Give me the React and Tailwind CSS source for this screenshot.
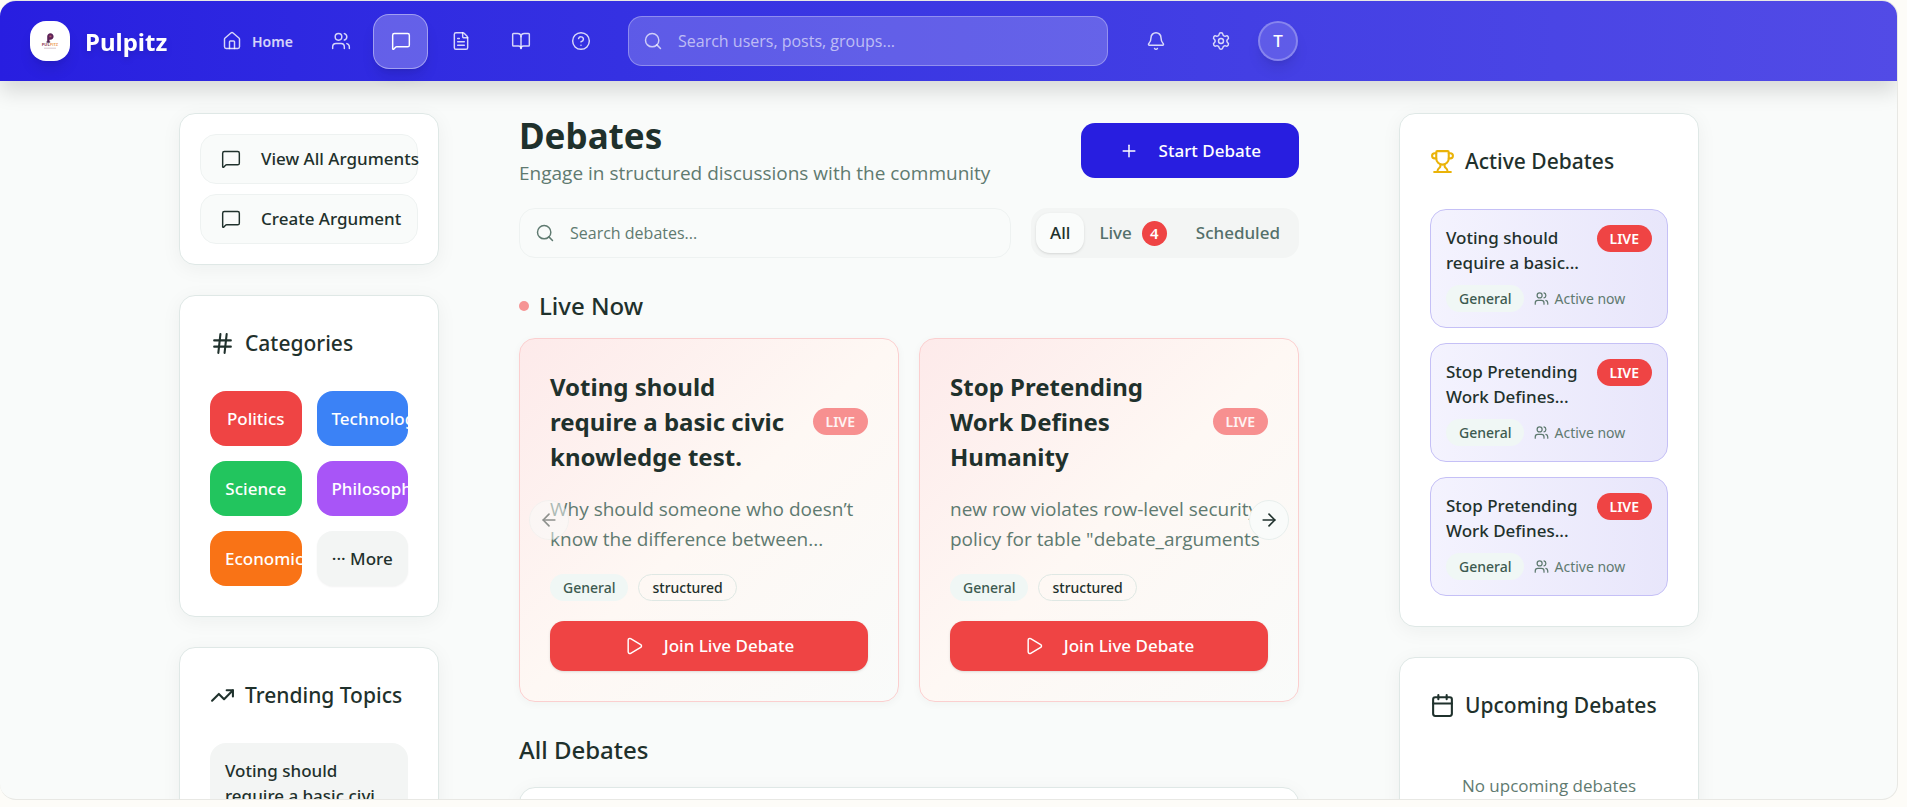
import {
  ArrowLeft, ArrowRight, Bell, BookOpen, Calendar, CircleHelp, FileText, Hash, House,
  MessageSquare, Play, Plus, Search, Settings, TrendingUp, Trophy, Users,
} from "lucide-react";

const CARD = "rounded-2xl border border-[#dfe8e6] bg-white shadow-[0_4px_20px_rgba(20,40,35,0.05)]";
const BODY = "font-['Open_Sans','Noto_Sans',sans-serif]";

function Logo() {
  return (
    <span className="flex size-10 shrink-0 items-center justify-center rounded-2xl bg-white shadow-lg">
      <svg width="18" height="18" viewBox="0 0 18 18" aria-hidden="true">
        <path d="M6.2 10.5V4.6C6.2 2.6 7.6 1.2 9.4 1.2s3.2 1.3 3.2 3.2-1.4 3.3-3.2 3.3h-.9v2.8z" fill="#5c2358" />
        <path d="M8.4 3.6h2v1.6h-2z" fill="#b5566c" />
        <path d="M5.4 9.6h3.8v1H5.4z" fill="#3a2140" />
        <text x="9" y="14.4" textAnchor="middle" fontSize="4" fontWeight="700" fontFamily="Open Sans, sans-serif" fill="#8c3b57">
          PUL<tspan fill="#eda05a">PITZ</tspan>
        </text>
        <path d="M3 16.2h12" stroke="#cdb9c2" strokeWidth="0.8" />
      </svg>
    </span>
  );
}

const NAV = [
  { label: "Groups", Icon: Users },
  { label: "Debates", Icon: MessageSquare, active: true },
  { label: "Articles", Icon: FileText },
  { label: "Library", Icon: BookOpen },
  { label: "Help", Icon: CircleHelp },
];

function Header() {
  return (
    <header className="relative z-10 flex h-20 shrink-0 items-center bg-linear-to-r from-[#281ee0] to-[#524be6] px-[30px] text-white shadow-[0_10px_20px_rgba(0,0,0,0.14)]">
      <a href="#" className="flex items-center gap-[15px]">
        <Logo />
        <span className="w-[85px] text-[24px] leading-[35px] font-bold drop-shadow-md">Pulpitz</span>
      </a>
      <nav className="ml-9 flex items-center gap-[5px]">
        <a href="#" className="flex h-[55px] w-[102px] items-center gap-[10px] px-4 text-[14px] font-semibold text-white/80">
          <House size={20} strokeWidth={1.75} className="shrink-0" />
          Home
        </a>
        {NAV.map(({ label, Icon, active }) => (
          <a
            key={label}
            href="#"
            aria-label={label}
            className={
              active
                ? "flex size-[55px] items-center justify-center rounded-2xl border border-white/40 bg-white/25 shadow-lg"
                : "flex size-[55px] items-center justify-center text-white/80"
            }
          >
            <Icon size={20} strokeWidth={1.75} />
          </a>
        ))}
      </nav>
      <label className="ml-5 flex h-[50px] w-full max-w-[480px] items-center gap-[15px] rounded-[14px] border border-white/30 bg-white/20 px-[14px]">
        <Search size={20} strokeWidth={1.75} className="shrink-0 text-white/70" />
        <input
          type="search"
          aria-label="Search users, posts, groups"
          placeholder="Search users, posts, groups..."
          className={`${BODY} min-w-0 flex-1 bg-transparent text-[16px] outline-none placeholder:text-white/60`}
        />
      </label>
      <div className="ml-5 flex items-center gap-[10px]">
        <button aria-label="Notifications" className="flex size-[55px] items-center justify-center text-white/80">
          <Bell size={20} strokeWidth={1.75} />
        </button>
        <button aria-label="Settings" className="flex size-[55px] items-center justify-center text-white/80">
          <Settings size={20} strokeWidth={1.75} />
        </button>
        <button aria-label="Account" className="flex size-10 items-center justify-center rounded-full border-2 border-white/25 bg-white/15 text-[17px] font-medium shadow-lg">
          T
        </button>
      </div>
    </header>
  );
}

function PanelTitle({ Icon, tone, children }) {
  return (
    <h2 className="flex h-[35px] items-center gap-[10px] text-[21px] font-medium whitespace-nowrap">
      <Icon size={25} className={tone} />
      {children}
    </h2>
  );
}

function Tag({ children }) {
  return (
    <span className="flex h-[27px] items-center rounded-full bg-[#f0f7f5] px-[13px] text-[14px] font-medium text-[#3d5a50]">
      {children}
    </span>
  );
}

const CATEGORIES = [
  { name: "Politics", style: "bg-[#ef4444] text-white" },
  { name: "Technology", style: "bg-[#3b82f6] text-white" },
  { name: "Science", style: "bg-[#22c55e] text-white" },
  { name: "Philosophy", style: "bg-[#a855f7] text-white" },
  { name: "Economics", style: "bg-[#f97316] text-white" },
  { name: "··· More", style: "bg-[#f3f5f4] text-[#1f312c] shadow-xs" },
];

function LeftColumn() {
  return (
    <aside className="flex w-[260px] shrink-0 flex-col gap-[30px]">
      <section className={`${CARD} flex flex-col gap-[10px] p-5`}>
        {["View All Arguments", "Create Argument"].map((label) => (
          <button
            key={label}
            className="flex h-[50px] items-center gap-5 rounded-2xl border border-[#eef2f1] bg-[#f9fbfa] px-5 text-[17px] font-medium whitespace-nowrap"
          >
            <MessageSquare size={20} strokeWidth={1.75} className="shrink-0" />
            {label}
          </button>
        ))}
      </section>

      <section className={`${CARD} flex flex-col gap-[30px] p-[30px]`}>
        <PanelTitle Icon={Hash}>Categories</PanelTitle>
        <div className="grid grid-cols-2 gap-[15px]">
          {CATEGORIES.map(({ name, style }) => (
            <button key={name} className={`${style} flex h-[55px] min-w-0 overflow-hidden rounded-2xl px-[15px] text-[17px] font-medium whitespace-nowrap`}>
              <span className="m-auto">{name}</span>
            </button>
          ))}
        </div>
      </section>

      <section className={`${CARD} flex flex-col gap-[30px] p-[30px]`}>
        <PanelTitle Icon={TrendingUp}>Trending Topics</PanelTitle>
        <a href="#" className="rounded-2xl bg-[#f3f5f4] p-[15px] text-[17px] leading-[25px] font-medium">
          Voting should<br />require a basic civi...
        </a>
      </section>
    </aside>
  );
}

const LIVE = [
  {
    title: "Voting should require a basic civic knowledge test.",
    text: ["Why should someone who doesn’t", "know the difference between..."],
  },
  {
    title: "Stop Pretending Work Defines Humanity",
    text: ["new row violates row-level security", 'policy for table "debate_arguments'],
  },
];

function LiveCard({ title, text }) {
  return (
    <article className="flex flex-col gap-5 rounded-2xl border border-[#fbcfcf] bg-linear-to-br from-[#fdeaea] via-[#fef8f4] to-[#f9fbfa] p-[30px] shadow-[0_2px_8px_rgba(20,40,35,0.04)]">
      <div className="flex items-center justify-between">
        <h3 className="w-[240px] text-[24px] leading-[35px] font-bold">{title}</h3>
        <span className="flex h-[27px] items-center rounded-full bg-[#f79090] px-[13px] text-[14px] font-semibold text-white/90">LIVE</span>
      </div>
      <p className={`${BODY} text-[19px] leading-[30px] whitespace-nowrap text-[#5f7a70]`}>
        {text[0]}<br />{text[1]}
      </p>
      <div className="flex gap-[10px]">
        <Tag>General</Tag>
        <span className="flex h-[27px] items-center rounded-full border border-[#dfe8e4] px-[13px] text-[14px] font-medium">structured</span>
      </div>
      <button className="flex h-[50px] items-center justify-center gap-5 rounded-[14px] bg-[#ef4444] text-[17px] font-medium text-white shadow-sm">
        <Play size={20} strokeWidth={1.75} />
        Join Live Debate
      </button>
    </article>
  );
}

function MainColumn() {
  return (
    <main className="mr-[100px] ml-20 min-w-0 flex-1">
      <div className="flex items-center justify-between">
        <div>
          <h1 className="text-[35px] leading-[45px] font-bold">Debates</h1>
          <p className={`${BODY} text-[19px] leading-[30px] text-[#5f7a70]`}>Engage in structured discussions with the community</p>
        </div>
        <button className="flex h-[55px] items-center gap-5 rounded-[14px] bg-[#281ee0] px-[38px] text-[17px] font-medium text-white">
          <Plus size={20} strokeWidth={1.75} />
          Start Debate
        </button>
      </div>

      <div className="mt-5 flex gap-5">
        <label className="flex h-[50px] min-w-0 flex-1 items-center gap-[15px] rounded-2xl border border-[#eef2f1] px-[15px]">
          <Search size={20} strokeWidth={1.75} className="shrink-0 text-[#5f7a70]" />
          <input
            type="search"
            aria-label="Search debates"
            placeholder="Search debates..."
            className={`${BODY} min-w-0 flex-1 bg-transparent text-[16px] outline-none placeholder:text-[#5f7a70]`}
          />
        </label>
        <div role="tablist" className="flex h-[50px] items-center rounded-2xl bg-[#f3f5f4] p-[5px] text-[17px] font-medium text-[#54706a]">
          <button role="tab" aria-selected="true" className="h-10 rounded-[14px] bg-[#fafcfb] px-[14px] text-[#1f312c] shadow-sm">All</button>
          <button role="tab" aria-selected="false" className="flex h-10 items-center gap-[10px] px-[15px]">
            Live
            <span className="flex size-[25px] items-center justify-center rounded-full bg-[#ef4444] text-[15px] font-semibold text-white">4</span>
          </button>
          <button role="tab" aria-selected="false" className="h-10 px-[14px]">Scheduled</button>
        </div>
      </div>

      <h2 className="mt-[30px] flex h-[35px] items-center gap-[10px] text-[24px] font-medium">
        <span className="size-[10px] rounded-full bg-[#f69494]" />
        Live Now
      </h2>
      <div className="relative mt-[15px] grid grid-cols-2 gap-5">
        {LIVE.map((d) => (
          <LiveCard key={d.title} {...d} />
        ))}
        <button aria-label="Previous" disabled className="absolute top-1/2 left-[10px] flex size-10 -translate-y-1/2 items-center justify-center rounded-full border border-[#e8efed] bg-[#f9fbfa] opacity-50">
          <ArrowLeft size={20} />
        </button>
        <button aria-label="Next" className="absolute top-1/2 right-[10px] flex size-10 -translate-y-1/2 items-center justify-center rounded-full border border-[#e8efed] bg-[#f9fbfa]">
          <ArrowRight size={20} />
        </button>
      </div>

      <h2 className="mt-[30px] text-[24px] leading-[35px] font-medium">All Debates</h2>
      <section className={`${CARD} mt-5 h-[200px]`} />
    </main>
  );
}

const ACTIVE = [
  ["Voting should", "require a basic..."],
  ["Stop Pretending", "Work Defines..."],
  ["Stop Pretending", "Work Defines..."],
];

function RightColumn() {
  return (
    <aside className="flex w-[300px] shrink-0 flex-col gap-[30px]">
      <section className={`${CARD} p-[30px]`}>
        <PanelTitle Icon={Trophy} tone="text-[#eab308]">Active Debates</PanelTitle>
        <ul className="mt-[30px] flex flex-col gap-[15px]">
          {ACTIVE.map(([first, second], i) => (
            <li key={i} className="rounded-2xl border border-[#c5c0f6] bg-linear-to-r from-[#f4f3fe] to-[#e8e6fb] p-[15px]">
              <div className="flex items-start justify-between">
                <h3 className="text-[17px] leading-[25px] font-medium whitespace-nowrap">{first}<br />{second}</h3>
                <span className="flex h-[27px] items-center rounded-full bg-[#ef4444] px-[13px] text-[14px] font-semibold text-white">LIVE</span>
              </div>
              <div className="mt-[10px] flex items-center gap-[10px]">
                <Tag>General</Tag>
                <span className="flex items-center gap-[5px] text-[14px] leading-5 text-[#5f7a70]">
                  <Users size={15} />
                  Active now
                </span>
              </div>
            </li>
          ))}
        </ul>
      </section>

      <section className={`${CARD} p-[30px]`}>
        <PanelTitle Icon={Calendar}>Upcoming Debates</PanelTitle>
        <p className={`${BODY} mt-[30px] py-5 text-center text-[17px] leading-[25px] text-[#5f7a70]`}>No upcoming debates</p>
      </section>
    </aside>
  );
}

export default function App() {
  return (
    <div className="h-screen overflow-hidden bg-[#fdfcf8] pr-[9px] pb-[7px] font-['Noto_Sans','Open_Sans',sans-serif] text-[#1f312c]">
      <div className="flex h-full flex-col overflow-hidden rounded-2xl border border-l-0 border-[#e8e8e4] bg-[#f9fbfa]">
        <Header />
        <div className="min-h-0 flex-1 overflow-hidden pt-8 pr-[19px]">
          <div className="mx-auto flex max-w-[1520px] items-start">
            <LeftColumn />
            <MainColumn />
            <RightColumn />
          </div>
        </div>
      </div>
    </div>
  );
}
